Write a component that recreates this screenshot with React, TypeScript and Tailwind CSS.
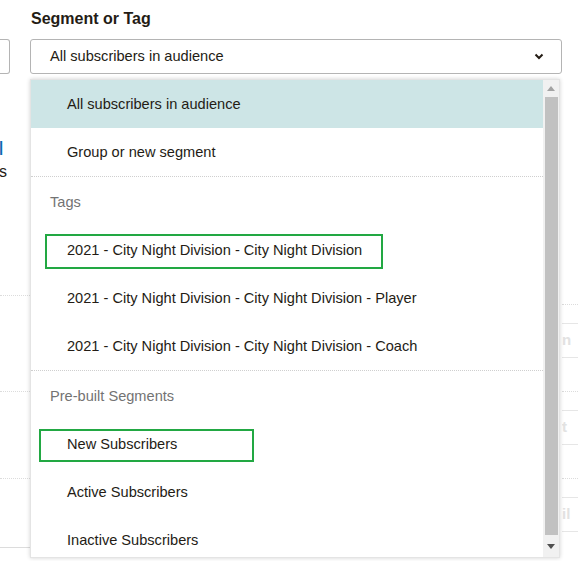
import React from "react";

const font = { fontFamily: '"Liberation Sans", Arial, sans-serif' };

const tags = [
  "2021 - City Night Division - City Night Division",
  "2021 - City Night Division - City Night Division - Player",
  "2021 - City Night Division - City Night Division - Coach",
];

function Item({ label, boxed }: { label: string; boxed?: "tag" | "seg" }) {
  return (
    <div className="relative flex h-[48px] shrink-0 items-center pl-[36px] pt-[2px] text-[14.6px] text-[#241c15]">
      {label}
      {boxed === "tag" && (
        <div className="absolute left-[14px] top-[8px] h-[35px] w-[338px] border-2 border-[#22a843]" />
      )}
      {boxed === "seg" && (
        <div className="absolute left-[8px] top-[9px] h-[33px] w-[215px] border-2 border-[#22a843]" />
      )}
    </div>
  );
}

function Header({ label }: { label: string }) {
  return (
    <div className="flex h-[48px] shrink-0 items-center pl-[19px] pt-[2px] text-[14.6px] text-[#737373]">
      {label}
    </div>
  );
}

function Divider() {
  return <div className="mb-px shrink-0 border-t border-dotted border-[#cfcfcf]" />;
}

function FadedCell({ text }: { text: string }) {
  return (
    <div className="flex flex-col">
      <div className="h-[19px] border-t border-dotted border-[#dcdcdc]" />
      <div className="flex h-[35px] items-center border-y border-[#e6e6e6] text-[15px] font-bold text-[#e2e2e2]">
        {text}
      </div>
    </div>
  );
}

export default function App() {
  return (
    <div
      className="relative flex h-[561px] w-[578px] overflow-hidden bg-white"
      style={font}
    >
      {/* left column, mostly cut off */}
      <div className="flex w-[30px] shrink-0 flex-col overflow-hidden">
        <div className="h-[39px]" />
        <div className="h-[35px] w-[10px] rounded-r-[3px] border border-l-0 border-[#b4b4b4]" />
        <div className="mt-[64px] -ml-px h-[18px] text-[15px] font-bold leading-[18px] text-[#0b68b1]">|</div>
        <div className="mt-[7px] -ml-px h-[18px] text-[16px] leading-[18px] text-[#241c15]">s</div>
        <div className="mt-[114px] border-t border-dotted border-[#dcdcdc]" />
        <div className="mt-[95px] border-t border-dotted border-[#dcdcdc]" />
        <div className="mt-[86px] border-t border-dotted border-[#dcdcdc]" />
        <div className="mt-[68px] border-t border-[#dcdcdc]" />
      </div>

      {/* main column */}
      <div className="flex w-[532px] shrink-0 flex-col">
        <div className="mt-[7px] h-[24px] pl-px text-[16px] font-bold leading-[24px] text-[#241c15]">
          Segment or Tag
        </div>
        <div className="mt-[8px] flex h-[35px] items-center justify-between rounded-[3px] border border-[#b4b4b4] pl-[19px] pr-[16px] text-[14.6px] text-[#241c15]">
          <span>All subscribers in audience</span>
          <svg width="10" height="7" viewBox="0 0 10 7" className="mr-px">
            <path d="M1.5 1.5 L5 5 L8.5 1.5" fill="none" stroke="#241c15" strokeWidth="2" />
          </svg>
        </div>
      </div>

      {/* right column, faded table behind */}
      <div className="flex flex-1 flex-col overflow-hidden">
        <div className="h-[304px]" />
        <FadedCell text="n" />
        <div className="h-[33px]" />
        <FadedCell text="t" />
        <div className="h-[33px]" />
        <FadedCell text="il" />
      </div>

      {/* open dropdown */}
      <div className="absolute left-[30px] top-[79px] flex h-[479px] w-[530px] border border-[#e4e4e4] bg-white shadow-[0_0_4px_rgba(0,0,0,0.18)]">
        <div className="flex flex-1 flex-col overflow-hidden">
          <div className="flex h-[48px] shrink-0 items-center bg-[#cde5e6] pl-[36px] pt-[2px] text-[14.6px] text-[#241c15]">
            All subscribers in audience
          </div>
          <Item label="Group or new segment" />
          <Divider />
          <Header label="Tags" />
          <Item label={tags[0]} boxed="tag" />
          <Item label={tags[1]} />
          <Item label={tags[2]} />
          <Divider />
          <Header label="Pre-built Segments" />
          <Item label="New Subscribers" boxed="seg" />
          <Item label="Active Subscribers" />
          <Item label="Inactive Subscribers" />
        </div>
        {/* scrollbar */}
        <div className="flex w-[16px] shrink-0 flex-col items-center bg-[#f1f1f1]">
          <div className="flex h-[17px] w-full items-center justify-center">
            <svg width="8" height="5" viewBox="0 0 8 5">
              <path d="M0 5 L4 0 L8 5 Z" fill="#a3a3a3" />
            </svg>
          </div>
          <div className="w-[13px] flex-1 bg-[#c1c1c1]" />
          <div className="flex h-[22px] w-full items-center justify-center">
            <svg width="8" height="5" viewBox="0 0 8 5">
              <path d="M0 0 L8 0 L4 5 Z" fill="#505050" />
            </svg>
          </div>
        </div>
      </div>
    </div>
  );
}
